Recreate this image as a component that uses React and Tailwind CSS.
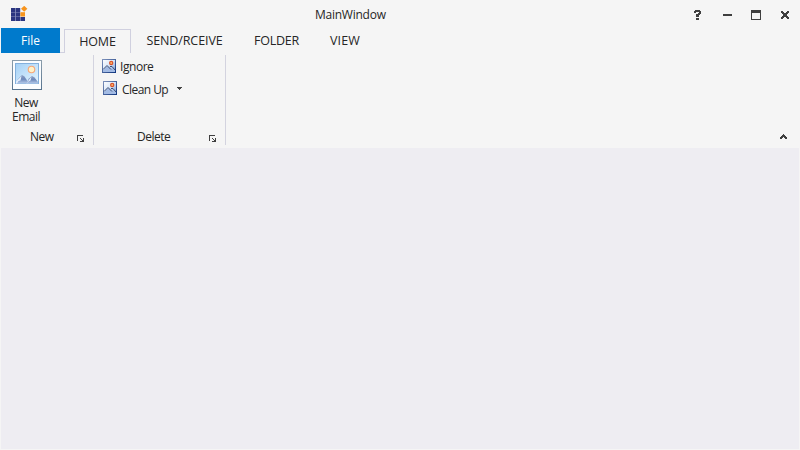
import React from "react";

function AppLogo() {
  return (
    <svg width="18" height="16" viewBox="0 0 18 16" className="block">
      <rect x="0" y="2" width="9" height="13" fill="#8a91bd" />
      <rect x="9" y="11" width="5" height="4" fill="#8a91bd" />
      <g fill="#2b3580">
        <rect x="0" y="2" width="4.2" height="4" />
        <rect x="5" y="2" width="4.2" height="4" />
        <rect x="0" y="6.5" width="4.2" height="4" />
        <rect x="5" y="6.5" width="4.2" height="4" />
        <rect x="0" y="11" width="4.2" height="4" />
        <rect x="5" y="11" width="4.2" height="4" />
        <rect x="10" y="11" width="4" height="4" />
      </g>
      <rect x="9.4" y="6.2" width="4.6" height="4.3" fill="#f7941d" />
      <path d="M13.2 -.2 16.4 2.8 13.2 5.8 10 2.8Z" fill="#f7941d" />
    </svg>
  );
}

function LargePicture() {
  return (
    <svg width="30" height="30" viewBox="0 0 30 30" className="block">
      <defs>
        <linearGradient id="sky" x2="1" y2="1">
          <stop stopColor="#a4d0f5" />
          <stop offset="1" stopColor="#e4f5ff" />
        </linearGradient>
        <linearGradient id="hill" x2="0" y2="1">
          <stop stopColor="#8da0c4" />
          <stop offset=".5" stopColor="#6d89bb" />
          <stop offset="1" stopColor="#b9cdec" />
        </linearGradient>
        <linearGradient id="frame" x2="0" y2="1">
          <stop stopColor="#8b9dab" />
          <stop offset="1" stopColor="#58748f" />
        </linearGradient>
      </defs>
      <rect x=".5" y=".5" width="29" height="29" fill="#fbfdff" stroke="url(#frame)" />
      <rect x="3.5" y="3.5" width="23" height="20" fill="url(#sky)" stroke="#83b0dc" />
      <circle cx="19.5" cy="9.5" r="3.8" fill="#f7a676" />
      <circle cx="19.5" cy="9.5" r="2.7" fill="#fff2c8" />
      <path d="M4 23.5V21.5L8 17 10 15 12.5 16.5 17 23.5Z" fill="url(#hill)" />
      <path d="M14 23.5 17 18.5 20 16 22.5 17.5 26 22V23.5Z" fill="url(#hill)" />
      <path d="M4 23.5V21.5L9.5 16 8.5 20.5 6.5 21 5 23.5Z M14.5 23.5 17.5 19 19.5 17 18.5 20.5 16.5 21.5Z" fill="#e5effd" />
    </svg>
  );
}

function SmallPicture() {
  return (
    <svg width="14" height="14" viewBox="0 0 14 14" className="block">
      <defs>
        <linearGradient id="small-sky" x2="1" y2="1">
          <stop stopColor="#ffffff" />
          <stop offset=".45" stopColor="#dce8f8" />
          <stop offset="1" stopColor="#6c94d4" />
        </linearGradient>
        <linearGradient id="small-frame" x2="1" y2="1">
          <stop stopColor="#7d91ba" />
          <stop offset="1" stopColor="#123780" />
        </linearGradient>
      </defs>
      <rect x=".5" y=".5" width="13" height="13" fill="url(#small-sky)" stroke="url(#small-frame)" />
      <path d="M1 11 5 7 9 10 11 9 13 11V13H1Z" fill="#a3bbe4" />
      <path d="M1 10.5 5 6.5 9 10.5M8 7.5H10L13 11" fill="none" stroke="#3b4d73" />
      <circle cx="9.2" cy="4" r="2.2" fill="#d9532a" />
      <circle cx="9.2" cy="4" r="1" fill="#ffb56b" />
    </svg>
  );
}

function Launcher() {
  return (
    <svg width="7" height="7" viewBox="0 0 7 7" className="block" fill="#3f3f3f" shapeRendering="crispEdges">
      <path d="M0 0H6V1H1V6H0Z M3 3H4V4H5V5H6V3H7V7H3V6H5V5H4V4H3Z" />
    </svg>
  );
}

function WindowButtons() {
  return (
    <div className="flex h-[28px] items-start text-[#3f3f3f]">
      <svg width="7" height="10" viewBox="0 0 7 10" className="mt-[10px]" fill="currentColor" shapeRendering="crispEdges">
        <path d="M1 0H6V1H7V4H6V5H5V7H2V4H4V3H5V2H2V3H0V1H1Z M2 8H5V10H2Z" />
      </svg>
      <svg width="9" height="2" className="mt-[14px] ml-[22px]" fill="currentColor">
        <rect width="9" height="2" />
      </svg>
      <svg width="10" height="10" viewBox="0 0 10 10" className="mt-[10px] ml-[19px]" fill="currentColor" shapeRendering="crispEdges">
        <path fillRule="evenodd" d="M0 0H10V10H0Z M1 3V9H9V3Z" />
      </svg>
      <svg width="8" height="8" viewBox="0 0 8 8" className="mt-[11px] ml-[20px]" fill="currentColor" shapeRendering="crispEdges">
        <path d="M0 0H2V1H3V2H5V1H6V0H8V2H7V3H6V5H7V6H8V8H6V7H5V6H3V7H2V8H0V6H1V5H2V3H1V2H0Z" />
      </svg>
    </div>
  );
}

export default function App() {
  return (
    <div className="flex h-[450px] w-[800px] flex-col overflow-hidden bg-[#f5f5f5] font-['Open_Sans','Noto_Sans',sans-serif] text-[12px] leading-[14px] text-[#262626]">
      <header className="flex h-[28px] shrink-0 items-start pr-[11px]">
        <div className="w-[315px] pt-[6px] pl-[11px]">
          <AppLogo />
        </div>
        <span className="grow pt-[8px] tracking-[-0.25px]">MainWindow</span>
        <WindowButtons />
      </header>

      <nav className="flex h-[25px] shrink-0 pl-px text-[12.5px] whitespace-nowrap">
        <div className="w-[59px] bg-[#007acc] pt-[6px] text-center text-[12px] text-white">File</div>
        <div className="w-[4px] border-b border-[#d0d0df]" />
        <div className="mt-px w-[67px] border border-b-0 border-[#d0d0df] pt-[5px] text-center tracking-[-0.1px]">HOME</div>
        <div className="w-[107px] pt-[6px] text-center tracking-[-0.1px]">SEND/RCEIVE</div>
        <div className="w-[77px] pt-[6px] text-center tracking-[-0.25px]">FOLDER</div>
        <div className="w-[60px] pt-[6px] text-center tracking-[0.2px]">VIEW</div>
      </nav>

      <section className="flex h-[95px] shrink-0 pt-[2px]">
        <div className="flex h-[90px] w-[94px] flex-col border-r border-[#d3d3df]">
          <div className="flex h-[75px] w-[52px] flex-col items-center pt-[5px]">
            <div className="ml-[2px]"><LargePicture /></div>
            <p className="mt-[6px] text-center tracking-[-0.5px]">New<br />Email</p>
          </div>
          <div className="flex">
            <span className="w-[77px] pl-[30px] tracking-[-0.5px]">New</span>
            <div className="pt-[5px]"><Launcher /></div>
          </div>
        </div>
        <div className="flex h-[90px] w-[132px] flex-col border-r border-[#d3d3df]">
          <div className="flex h-[22px] items-start pt-[4px] pl-[8px]">
            <SmallPicture />
            <span className="mt-px ml-[4px] tracking-[-0.45px]">Ignore</span>
          </div>
          <div className="flex h-[53px] items-start pt-[4px] pl-[9px]">
            <SmallPicture />
            <span className="mt-[2px] ml-[5px] w-[47px] tracking-[-0.55px] whitespace-nowrap">Clean Up</span>
            <svg width="5" height="3" viewBox="0 0 5 3" className="mt-[6px] ml-[8px]" fill="#444" shapeRendering="crispEdges">
              <path d="M0 0H5V1H4V2H3V3H2V2H1V1H0Z" />
            </svg>
          </div>
          <div className="flex">
            <span className="w-[115px] pl-[43px] tracking-[-0.5px]">Delete</span>
            <div className="pt-[5px]"><Launcher /></div>
          </div>
        </div>
        <div className="flex grow items-start justify-end pt-[79px] pr-[13px]">
          <svg width="7" height="5" viewBox="0 0 7 5" fill="#3f3f3f" shapeRendering="crispEdges">
            <path d="M3 0H4V1H5V2H6V3H7V5H5V4H4V3H3V4H2V5H0V3H1V2H2V1H3Z" />
          </svg>
        </div>
      </section>
      <main className="mx-px mb-px grow bg-[#eeedf2]" />
    </div>
  );
}
